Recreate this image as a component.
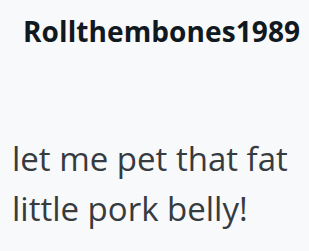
export default function App() {
  return (
    <div className="w-[309px] h-[251px] bg-[#f8f9fa] overflow-hidden" style={{fontFamily: '"Open Sans", sans-serif'}}>
      <div className="pl-[23px] pt-[11px] text-[28px] font-bold text-[#101820] leading-[40px] tracking-[0.1px]">Rollthembones1989</div>
      <div className="pl-[12px] pt-[83px] text-[33px] text-[#363b40] leading-[50px]">let me pet that fat little pork belly!</div>
    </div>
  );
}
